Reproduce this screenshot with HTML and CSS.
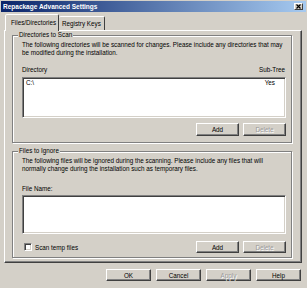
FILE: index.html
```html
<!DOCTYPE html>
<html lang="en">
<head>
  <meta charset="UTF-8" />
  <title>Repackage Advanced Settings</title>
  <link rel="stylesheet" href="styles.css">
</head>
<body>
  <div class="window">
    <!-- title bar -->
    <div class="titlebar">
      <span class="title">Repackage Advanced Settings</span>
      <span class="close">
        <svg width="5" height="5" viewBox="0 0 5 5">
          <path d="M0.5 0.5 L4.5 4.5 M4.5 0.5 L0.5 4.5" stroke="#000" stroke-width="1.2" />
        </svg>
      </span>
    </div>

    <div class="content">
      <!-- tabs -->
      <div class="tabs">
        <div class="tab active">Files/Directories</div>
        <div class="tab">Registry Keys</div>
      </div>

      <div class="panel">
        <!-- Directories to Scan -->
        <div class="group group-dirs">
          <span class="legend">Directories to Scan</span>
          <p class="desc">The following directories will be scanned for changes. Please include any directories that may be modified during the installation.</p>
          <div class="list-head">
            <span>Directory</span>
            <span>Sub-Tree</span>
          </div>
          <div class="listbox list-dirs">
            <div class="list-row">
              <span>C:\</span>
              <span class="subtree">Yes</span>
            </div>
          </div>
          <div class="actions">
            <button class="btn">Add</button>
            <button class="btn" disabled>Delete</button>
          </div>
        </div>

        <!-- Files to Ignore -->
        <div class="group group-files">
          <span class="legend">Files to Ignore</span>
          <p class="desc">The following files will be ignored during the scanning. Please include any files that will normally change during the installation such as temporary files.</p>
          <div class="list-head files-head">
            <span>File Name:</span>
          </div>
          <div class="listbox list-files"></div>
          <div class="actions actions-split">
            <label class="check">
              <span class="box"></span>
              Scan temp files
            </label>
            <div class="btn-pair">
              <button class="btn">Add</button>
              <button class="btn" disabled>Delete</button>
            </div>
          </div>
        </div>
      </div>

      <!-- dialog buttons -->
      <div class="footer">
        <button class="btn btn-wide">OK</button>
        <button class="btn btn-wide">Cancel</button>
        <button class="btn btn-wide" disabled>Apply</button>
        <button class="btn btn-wide">Help</button>
      </div>
    </div>
  </div>
</body>
</html>
```

FILE: styles.css
```css
/* ===== base ===== */
body {
  margin: 0;
  padding: 0;
  background: #d4d0c8;
  font-family: 'Liberation Sans', Arial, sans-serif;
  font-size: 6.3px;
  color: #000;
}

.window {
  width: 307px;
  height: 288px;
  box-sizing: border-box;
  padding: 1px 1px 0 1px;
  background: #d4d0c8;
  overflow: hidden;
}

/* ===== title bar ===== */
.titlebar {
  height: 11px;
  display: flex;
  align-items: center;
  justify-content: space-between;
  padding: 0 3px 0 2px;
  background: linear-gradient(to right, #0a246a, #a6caf0);
}
.title {
  color: #fff;
  font-weight: 700;
  font-size: 6.5px;
}
.close {
  width: 9px;
  height: 7px;
  box-sizing: border-box;
  display: flex;
  align-items: center;
  justify-content: center;
  background: #d4d0c8;
  border: 1px solid;
  border-color: #fff #404040 #404040 #fff;
}

/* ===== body ===== */
.content {
  padding: 0 4px 0 3px;
}

.tabs {
  display: flex;
  align-items: flex-end;
  height: 16px;
  margin-top: 2px;
  padding-left: 1px;
}
.tab {
  height: 14px;
  box-sizing: border-box;
  padding: 0 4px;
  display: flex;
  align-items: center;
  white-space: nowrap;
  border: 1px solid;
  border-bottom: none;
  border-color: #fff #404040 transparent #fff;
  border-radius: 2px 2px 0 0;
  background: #d4d0c8;
}
.tab.active {
  height: 17px;
  width: 54px;
  margin-bottom: -1px;
  padding: 0 0 2px 5px;
  position: relative;
  z-index: 1;
}
.tab:not(.active) {
  width: 46px;
  border-left: none;
  padding-left: 3px;
}

.panel {
  height: 233px;
  box-sizing: border-box;
  padding: 4px 9px 0 7px;
  border: 1px solid;
  border-color: #fff #404040 #404040 #fff;
  box-shadow: inset -1px -1px 0 #808080;
}

/* ===== group boxes ===== */
.group {
  position: relative;
  border: 1px solid #808080;
  box-shadow: inset 1px 1px 0 #fff, 1px 1px 0 #fff;
  padding: 5px 5px 0 9px;
}
.group-dirs {
  height: 108px;
  box-sizing: border-box;
}
.group-files {
  height: 107px;
  box-sizing: border-box;
  margin-top: 8px;
}
.legend {
  position: absolute;
  top: -5px;
  left: 5px;
  padding: 0 1px;
  line-height: 8px;
  background: #d4d0c8;
}

.desc {
  margin: 0;
  line-height: 8px;
}

.list-head {
  display: flex;
  justify-content: space-between;
  line-height: 8px;
  margin-top: 9px;
  padding-right: 1px;
}
.files-head {
  margin-top: 12px;
}

.listbox {
  background: #fff;
  border: 1px solid;
  border-color: #808080 #fff #fff #808080;
  box-shadow: inset 1px 1px 0 #404040, inset -1px -1px 0 #d4d0c8;
  box-sizing: border-box;
}
.list-dirs {
  height: 41px;
  margin-top: 3px;
}
.list-files {
  height: 39px;
  margin-top: 2px;
}
.list-row {
  display: flex;
  justify-content: space-between;
  line-height: 8px;
  padding: 1px 10px 0 3px;
}

/* ===== buttons ===== */
.actions {
  display: flex;
  justify-content: flex-end;
  gap: 4px;
  margin-top: 5px;
}
.actions-split {
  justify-content: space-between;
  align-items: center;
  margin-top: 7px;
}
.btn-pair {
  display: flex;
  gap: 4px;
}

.btn {
  width: 43px;
  height: 13px;
  padding: 0;
  box-sizing: border-box;
  font-family: inherit;
  font-size: 6.3px;
  color: #000;
  background: #d4d0c8;
  border: 1px solid;
  border-color: #fff #404040 #404040 #fff;
  box-shadow: inset -1px -1px 0 #808080;
}
.actions-split .btn {
  height: 12px;
}
.btn:disabled {
  color: #9a9a9a;
  text-shadow: 1px 1px 0 #fff;
}

/* ===== checkbox ===== */
.check {
  display: flex;
  align-items: center;
  gap: 3px;
  margin-left: 2px;
}
.box {
  width: 8px;
  height: 8px;
  box-sizing: border-box;
  background: #fff;
  border: 1px solid;
  border-color: #808080 #fff #fff #808080;
  box-shadow: inset 1px 1px 0 #404040, inset -1px -1px 0 #d4d0c8;
}

/* ===== footer ===== */
.footer {
  display: flex;
  justify-content: flex-end;
  gap: 5px;
  margin-top: 6px;
  padding-right: 1px;
}
.btn-wide {
  width: 45px;
  height: 12px;
}
```
